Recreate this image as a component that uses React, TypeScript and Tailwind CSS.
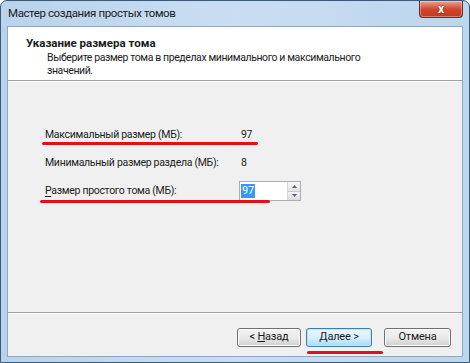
import React from "react";

const font = { fontFamily: 'Roboto, "Liberation Sans", sans-serif' };

function Btn({ children, primary, w }: { children: React.ReactNode; primary?: boolean; w: string }) {
  return (
    <div
      className={
        "flex h-[19px] items-center justify-center rounded-[3px] border text-[11px] tracking-[-0.2px] text-[#1a1a1a] " +
        w +
        " " +
        (primary
          ? "border-[#3c7fb1] bg-gradient-to-b from-[#eaf6fd] via-[#d9f0fc] to-[#a7d9f5] shadow-[inset_0_0_0_1px_#bfe3f8]"
          : "border-[#707070] bg-gradient-to-b from-[#f2f2f2] via-[#ebebeb] to-[#cfcfcf] shadow-[inset_0_0_0_1px_#fcfcfc]")
      }
    >
      <span>{children}</span>
    </div>
  );
}

export default function App() {
  return (
    <div style={font} className="relative h-[363px] w-[470px] overflow-hidden bg-white">
      <div className="flex h-full w-full flex-col rounded-t-[7px] border border-[#3b5a79] bg-gradient-to-r from-[#b9d3ec] via-[#c9def2] to-[#bcd6ee]">
        {/* title bar */}
        <div className="flex h-[25px] shrink-0 items-start justify-between">
          <div className="pl-[7px] pt-[5px] text-[11.5px] leading-[15px] tracking-[-0.4px] text-[#1b1b1b]">
            Мастер создания простых томов
          </div>
          <div className="mr-[6px] flex h-[17px] w-[44px] items-center justify-center rounded-b-[4px] border border-t-0 border-[#6b2b25] bg-gradient-to-b from-[#e8a493] via-[#d1452f] to-[#c23a22] shadow-[inset_0_0_0_1px_rgba(255,255,255,0.35)]">
            <span className="text-[12px] font-bold leading-none text-white [text-shadow:0_0_2px_#5a1a10]">x</span>
          </div>
        </div>
        {/* client */}
        <div className="mx-[6px] mb-[5px] flex flex-1 flex-col border border-[#8ea8c3] bg-[#f0f0f0]">
          <div className="flex h-[54px] shrink-0 flex-col border-b border-[#a0a0a0] bg-white pt-[9px] text-[#1b1b1b]">
            <div className="pl-[18px] text-[11.5px] font-bold leading-[15px]">Указание размера тома</div>
            <div className="pl-[39px] text-[10.5px] leading-[13px] tracking-[-0.4px]">
              Выберите размер тома в пределах минимального и максимального
              <br />
              значений.
            </div>
          </div>
          <div className="flex flex-1 flex-col border-t border-white pl-[37px] pt-[45px] text-[10.5px] tracking-[-0.3px] text-[#1b1b1b]">
            <div className="flex h-[16px] items-center">
              <div className="w-[196px]">Максимальный размер (МБ):</div>
              <div>97</div>
            </div>
            <div className="mt-[12px] flex h-[16px] items-center">
              <div className="w-[196px]">Минимальный размер раздела (МБ):</div>
              <div>8</div>
            </div>
            <div className="mt-[10px] flex h-[20px] items-center">
              <div className="w-[194px]">
                <span className="underline underline-offset-2">Р</span>азмер простого тома (МБ):
              </div>
              <div className="flex h-[20px] w-[62px] border border-[#abadb3] bg-white">
                <div className="flex flex-1 items-center pl-[1px]">
                  <span className="bg-[#3399ff] px-[1px] text-[11px] leading-[14px] text-white">97</span>
                </div>
                <div className="flex w-[13px] flex-col border-l border-[#d5d5d5]">
                  <div className="flex flex-1 items-center justify-center border-b border-[#c9c9c9] bg-gradient-to-b from-[#f7f7f7] to-[#e3e3e3]">
                    <svg width="5" height="3" viewBox="0 0 5 3"><path d="M0 3 L2.5 0 L5 3Z" fill="#4d6185" /></svg>
                  </div>
                  <div className="flex flex-1 items-center justify-center bg-gradient-to-b from-[#f3f3f3] to-[#dedede]">
                    <svg width="5" height="3" viewBox="0 0 5 3"><path d="M0 0 L2.5 3 L5 0Z" fill="#4d6185" /></svg>
                  </div>
                </div>
              </div>
            </div>
          </div>
          <div className="flex h-[44px] shrink-0 items-start justify-end border-t border-[#a0a0a0] pr-[11px] pt-[15px] shadow-[inset_0_1px_0_#ffffff]">
            <Btn w="w-[64px]">
              &lt; <span className="underline underline-offset-1">Н</span>азад
            </Btn>
            <div className="w-[5px]" />
            <Btn primary w="w-[66px]">
              <span className="underline underline-offset-1">Д</span>алее &gt;
            </Btn>
            <div className="w-[12px]" />
            <Btn w="w-[67px]">Отмена</Btn>
          </div>
        </div>
      </div>
      {/* red annotation lines */}
      <div className="absolute left-[42px] top-[142px] h-[3px] w-[216px] rounded-full bg-[#e3101a]" />
      <div className="absolute left-[40px] top-[200px] h-[3px] w-[230px] rounded-full bg-[#e3101a]" />
      <div className="absolute left-[307px] top-[351px] h-[3px] w-[76px] rounded-full bg-[#e3101a]" />
    </div>
  );
}
